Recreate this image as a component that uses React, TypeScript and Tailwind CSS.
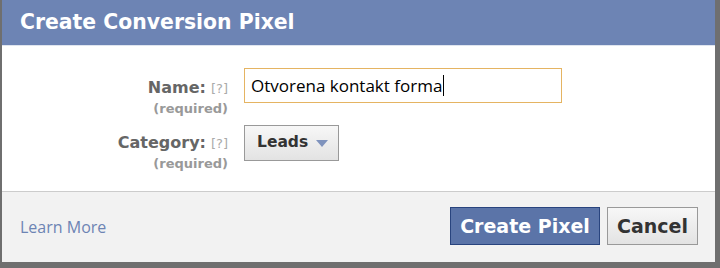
import React from "react";

const dv = { fontFamily: '"DejaVu Sans", sans-serif' };
const os = { fontFamily: '"Open Sans", sans-serif' };

function Label({ text }: { text: string }) {
  return (
    <div className="w-[226px] flex flex-col items-end">
      <div className="flex items-baseline gap-[5px] leading-none">
        <span className="text-[#666] font-bold text-[16px]">{text}</span>
        <span className="text-[#aaa] text-[13px]">[?]</span>
      </div>
      <span className="text-[#999] font-bold text-[13px] leading-none mt-[6px]">(required)</span>
    </div>
  );
}

export default function App() {
  return (
    <div className="w-[720px] h-[268px] bg-[#6f6f6f] overflow-hidden" style={dv}>
      <div className="ml-[2px] w-[713px] h-[262px] flex flex-col bg-white">
        <div className="h-[46px] bg-[#6d84b4] border-b border-[#dfe5ef] flex items-center pl-[18px]">
          <span className="text-white font-bold text-[20.4px] leading-none">Create Conversion Pixel</span>
        </div>
        <div className="flex-1 pt-[22px]">
          <div className="flex items-start h-[35px]">
            <div className="pt-[12px]"><Label text="Name:" /></div>
            <div className="ml-[16px] w-[318px] h-[35px] border border-[#e5b462] flex items-center pl-[6px] text-[17px] text-black" style={os}>
              Otvorena kontakt forma<span className="inline-block w-px h-[21px] bg-black ml-px" />
            </div>
          </div>
          <div className="flex items-start h-[36px] mt-[22px]">
            <div className="pt-[10px]"><Label text="Category:" /></div>
            <div className="ml-[16px] w-[95px] h-[36px] border border-[#999] bg-gradient-to-b from-[#f7f7f7] to-[#e3e3e3] flex items-center pl-[12px] gap-[8px]">
              <span className="text-[#333] font-bold text-[15.5px]">Leads</span>
              <svg width="12" height="7" viewBox="0 0 12 7"><path d="M0 0h12L6 7z" fill="#7f93bd" /></svg>
            </div>
          </div>
        </div>
        <div className="h-[71px] bg-[#f2f2f2] border-t border-[#ccc] flex items-center pl-[18px] pr-[17px]">
          <span className="text-[#6d84b4] text-[16px]" style={os}>Learn More</span>
          <div className="ml-auto flex gap-[7px] pb-[2px]">
            <div className="w-[150px] h-[38px] bg-[#5b74a8] border border-[#29447e] flex items-center justify-center text-white font-bold text-[19px]">Create Pixel</div>
            <div className="w-[91px] h-[38px] border border-[#999] bg-gradient-to-b from-[#f7f7f7] to-[#e3e3e3] flex items-center justify-center text-[#333] font-bold text-[19px]">Cancel</div>
          </div>
        </div>
      </div>
    </div>
  );
}
